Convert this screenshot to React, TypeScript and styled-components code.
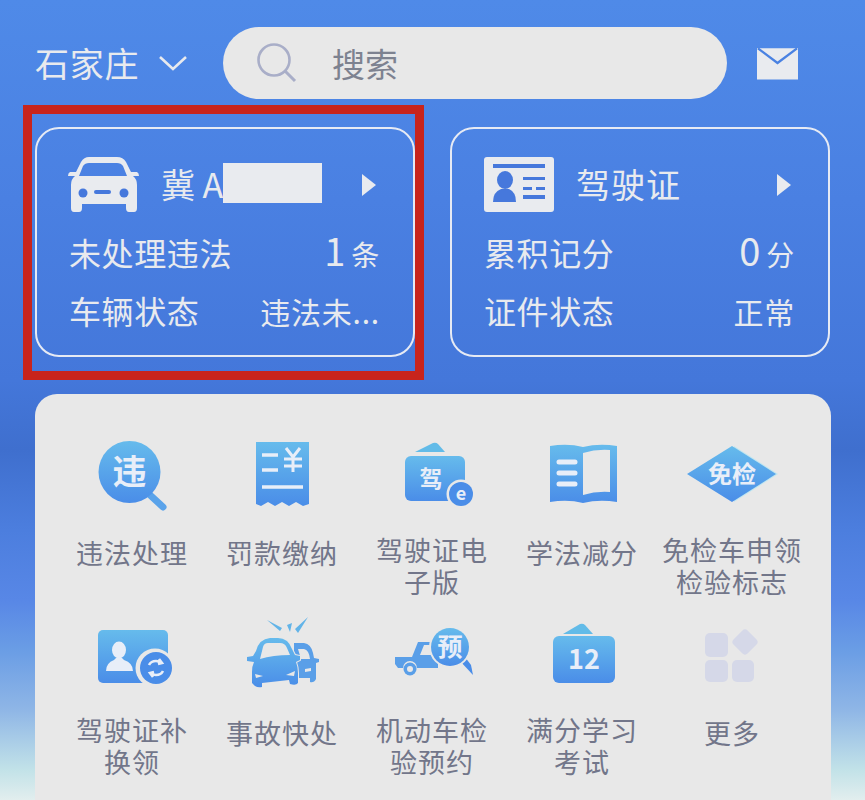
import React from "react";
import styled, { createGlobalStyle } from "styled-components";

const GlobalStyle = createGlobalStyle`
  html, body {
    margin: 0;
    padding: 0;
    background: #4a7fe0;
  }
  *, *::after {
    box-sizing: border-box;
  }
`;

const Page = styled.div`
  width: 865px;
  height: 800px;
  overflow: hidden;
  padding: 27px 35px 0;
  font-family: "Noto Sans CJK SC", "Noto Sans", sans-serif;
  background: linear-gradient(
    180deg,
    #4f8ae8 0,
    #4a80e2 200px,
    #4477da 380px,
    #3f6fce 450px,
    #4c7ede 530px,
    #5887e6 600px,
    #6a9de5 650px,
    #8fb6e6 710px,
    #c2e2e8 770px,
    #e2eeee 800px
  );
`;

const TopBar = styled.div`
  display: flex;
  align-items: center;
  height: 72px;
`;

const CityName = styled.span`
  font-size: 34px;
  letter-spacing: 0.7px;
  line-height: 72px;
  color: #e8eaee;
`;

const CityChevron = styled.svg`
  width: 30px;
  height: 18px;
  margin: 0 35px 0 19px;
`;

const SearchBox = styled.div`
  display: flex;
  align-items: center;
  width: 504px;
  height: 72px;
  padding-left: 33px;
  border-radius: 36px;
  background: #e8e8e8;
`;

const SearchIcon = styled.svg`
  width: 42px;
  height: 42px;
`;

const SearchHint = styled.span`
  margin-left: 34px;
  font-size: 33px;
  color: #7d8290;
`;

const MailIcon = styled.svg`
  width: 41px;
  height: 33px;
  margin-left: 30px;
`;

const Cards = styled.div`
  display: flex;
  gap: 35px;
  margin-top: 28px;
`;

const Card = styled.div<{ $marked?: boolean }>`
  position: relative;
  width: 380px;
  height: 230px;
  padding: 28px 33px 0 31px;
  border: 2px solid #e6eaf4;
  border-radius: 24px;
  color: #e8eaee;

  ${({ $marked }) =>
    $marked &&
    `
    &::after {
      content: "";
      position: absolute;
      left: -14px;
      top: -24px;
      width: 401px;
      height: 275px;
      border: 9px solid #c8241c;
    }
  `}
`;

const CardHead = styled.div`
  display: flex;
  align-items: center;
  height: 56px;
  margin-bottom: 10px;
`;

const CardIcon = styled.svg`
  width: 72px;
  height: 56px;
  flex: none;
`;

const CardTitle = styled.div<{ $wide?: boolean }>`
  display: flex;
  align-items: center;
  margin: -2px 0 0 21px;
  font-size: 34px;
  line-height: 40px;
  letter-spacing: ${({ $wide }) => ($wide ? 1 : 0)}px;
`;

const PlateMask = styled.span`
  width: 99px;
  height: 40px;
  margin-top: -3px;
  background: #e9ebef;
`;

const CardArrow = styled.svg`
  width: 16px;
  height: 26px;
  margin-left: auto;
  margin-right: 3px;
`;

const CardRow = styled.div`
  display: flex;
  align-items: baseline;
  justify-content: space-between;
  height: 58px;
  padding-left: 1px;
  font-size: 32px;
  letter-spacing: 0.6px;
  line-height: 58px;
`;

const RowValue = styled.span`
  font-size: 30px;
  letter-spacing: 0.8px;
`;

const RowNumber = styled.span`
  font-size: 38px;
  line-height: 1;
  margin-right: 5px;
`;

const RowUnit = styled.span`
  font-size: 28px;
`;

const Panel = styled.div`
  width: 796px;
  height: 420px;
  margin-top: 37px;
  padding: 43px 22px 0;
  border-radius: 22px 22px 0 0;
  background: #e8e8e8;
`;

const Grid = styled.div`
  display: grid;
  grid-template-columns: repeat(5, 150px);
  grid-auto-rows: 180px;
`;

const Tile = styled.div`
  display: flex;
  flex-direction: column;
  align-items: center;
`;

const TileIcon = styled.svg`
  width: 100px;
  height: 80px;
  flex: none;
`;

const TileLabel = styled.div<{ $single?: boolean }>`
  margin-top: ${({ $single }) => ($single ? 20 : 17)}px;
  font-size: 27px;
  line-height: 32px;
  letter-spacing: 1px;
  text-align: center;
  color: #72768a;
  white-space: nowrap;
`;

const LabelLine = styled.div``;

const BLUE = "url(#tileBlue)";
const PANEL = "#e8e8e8";

const GlyphText = styled.text`
  font-family: "Noto Sans CJK SC", sans-serif;
  font-weight: 700;
  fill: #e8eef8;
  text-anchor: middle;
`;

const Defs = () => (
  <svg width="0" height="0" style={{ position: "absolute" }}>
    <defs>
      <linearGradient id="tileBlue" x1="0" y1="0" x2="0" y2="1">
        <stop offset="0" stopColor="#66bbec" />
        <stop offset="1" stopColor="#4a8de8" />
      </linearGradient>
    </defs>
  </svg>
);

const tiles: { lines: string[]; icon: React.ReactNode }[] = [
  {
    lines: ["违法处理"],
    icon: (
      <>
        <path d="M68 58l13 12" stroke="#5aa3ea" strokeWidth="7" strokeLinecap="round" />
        <circle cx="47.5" cy="35" r="31" fill={BLUE} />
        <GlyphText x="47.5" y="47" fontSize="34">违</GlyphText>
      </>
    )
  },
  {
    lines: ["罚款缴纳"],
    icon: (
      <>
        <path
          d="M24 5h53v62l-6 2-7-4-7 4-7-4-7 4-7-4-7 4-5-2z"
          fill={BLUE}
        />
        <path d="M30 18h16M30 33h16M30 50h41" stroke="#e8eef8" strokeWidth="3.5" />
        <path
          d="M54 11l7 9 7-9M52 22h18M52 29h18M61 20v15"
          stroke="#e8eef8"
          strokeWidth="3"
          fill="none"
        />
      </>
    )
  },
  {
    lines: ["驾驶证电", "子版"],
    icon: (
      <>
        <path d="M33 15L51 6q3-1 5 1l7 8z" fill="#62bbe8" />
        <rect x="23" y="19" width="60" height="45" rx="6" fill={BLUE} />
        <GlyphText x="49" y="50" fontSize="23">驾</GlyphText>
        <circle cx="79" cy="57" r="14.5" fill={PANEL} />
        <circle cx="79" cy="57" r="12" fill="#4a8de8" />
        <GlyphText x="79" y="63" fontSize="18">e</GlyphText>
      </>
    )
  },
  {
    lines: ["学法减分"],
    icon: (
      <>
        <path
          d="M18 9q18-3 33 1 16-4 34-1v56q-18-3-34 1-15-4-33-1z"
          fill={BLUE}
        />
        <path d="M51 16q13-4 27-3v42q-14-1-27 3z" fill={PANEL} />
        <path d="M27 25h16M27 36h16M27 47h16" stroke="#e8eef8" strokeWidth="5" strokeLinecap="round" />
      </>
    )
  },
  {
    lines: ["免检车申领", "检验标志"],
    icon: (
      <>
        <path d="M52 9l44 28-44 28z" fill="#bfe6f0" />
        <path d="M50 9l44 28-44 28L5 37z" fill={BLUE} />
        <GlyphText x="50" y="46" fontSize="24">免检</GlyphText>
      </>
    )
  },
  {
    lines: ["驾驶证补", "换领"],
    icon: (
      <>
        <rect x="16" y="13" width="70" height="53" rx="5" fill={BLUE} />
        <ellipse cx="37" cy="33" rx="7" ry="8.5" fill="#e8eef8" />
        <path d="M24 54q0-8 8-11l2-2h6l2 2q9 3 9 11z" fill="#e8eef8" />
        <circle cx="73" cy="51" r="19.5" fill={PANEL} />
        <circle cx="74" cy="51" r="16" fill="#4a8de8" />
        <path
          d="M67 48q2-4 7-4 3 0 5 2M77 42l3 4-4 1M81 54q-2 4-7 4-3 0-5-2M71 60l-3-4 4-1"
          stroke="#e8eef8"
          strokeWidth="2.6"
          fill="none"
        />
      </>
    )
  },
  {
    lines: ["事故快处"],
    icon: (
      <>
        <path d="M35 3l15 8-2 3zM55 8l5-2-2 9zM76 0l-13 12 3 4z" fill="#62b4e8" />
        <path
          d="M62 26H72q7 1 9 10l1 5 5 1v3l-3 1v16q-2 4-6 3v-4H62z"
          fill="#5a9fe8"
        />
        <path d="M66 32h6q5 1 6 10H69zM73 52l6-1v3l-6 1z" fill={PANEL} />
        <path
          d="M24 34q3-12 14-13h8q10 0 14 11l3 6 5 1v4l-4 2q2 5 2 11v10q-2 3-8 1l-1-4-27 3v4q-4 1-7-1l-3-3V55q0-6 2-10l-7-1v-4l6-1z"
          fill={BLUE}
          stroke={PANEL}
          strokeWidth="2"
          paintOrder="stroke"
        />
        <path d="M28 42l3-12q1-4 5-4h12q5 0 7 5l3 7q-17 0-30 4z" fill={PANEL} />
        <path d="M23 57l8 2-7 2zM63 54l-9 4 8 1z" fill={PANEL} />
      </>
    )
  },
  {
    lines: ["机动车检", "验预约"],
    icon: (
      <>
        <path
          d="M13 40H30L36 25H56V51H35a7 7 0 0 0-14 0H16l-3-4z"
          fill="#5a9fe8"
        />
        <path d="M38 38l4-10h10v10z" fill={PANEL} />
        <circle cx="28" cy="52" r="6.5" fill="#5a9fe8" />
        <circle cx="28" cy="52" r="3" fill={PANEL} />
        <path d="M78 44l13 14-2-10-6-8z" fill="#4a8de8" />
        <circle cx="68" cy="30" r="21" fill={PANEL} />
        <circle cx="68" cy="30" r="19" fill={BLUE} />
        <GlyphText x="68" y="39" fontSize="25">预</GlyphText>
      </>
    )
  },
  {
    lines: ["满分学习", "考试"],
    icon: (
      <>
        <path d="M31 17L48 7q3-1 5 1l8 9z" fill="#62bbe8" />
        <rect x="21" y="19" width="62" height="47" rx="6" fill={BLUE} />
        <GlyphText x="52" y="52" fontSize="27">12</GlyphText>
      </>
    )
  },
  {
    lines: ["更多"],
    icon: (
      <>
        <rect x="23" y="16" width="23" height="24" rx="5" fill="#d5d8e8" />
        <rect x="23" y="43" width="23" height="22" rx="5" fill="#d5d8e8" />
        <rect x="50" y="43" width="22" height="22" rx="5" fill="#d5d8e8" />
        <rect x="53" y="15" width="20" height="20" rx="4" fill="#d5d8e8" transform="rotate(45 63 25)" />
      </>
    )
  }
];

const Arrow = () => (
  <CardArrow viewBox="0 0 16 26">
    <path d="M1 2l14 11L1 24z" fill="#e9ebef" />
  </CardArrow>
);

const App = () => {
  return (
    <Page>
      <GlobalStyle />
      <Defs />
      <TopBar>
        <CityName>石家庄</CityName>
        <CityChevron viewBox="0 0 30 18">
          <path d="M2 3l13 12L28 3" stroke="#e8eaee" strokeWidth="2.6" fill="none" />
        </CityChevron>
        <SearchBox>
          <SearchIcon viewBox="0 0 42 42">
            <circle cx="18" cy="18" r="15.5" stroke="#a9aec8" strokeWidth="2.6" fill="none" />
            <path d="M29 29l10 10" stroke="#a9aec8" strokeWidth="3" />
          </SearchIcon>
          <SearchHint>搜索</SearchHint>
        </SearchBox>
        <MailIcon viewBox="0 0 42 33">
          <path d="M0 1h42v32H0z" fill="#e9ebef" />
          <path d="M1 1l20 15L41 1" stroke="#4a82e2" strokeWidth="2.4" fill="none" />
        </MailIcon>
      </TopBar>

      <Cards>
        <Card $marked>
          <CardHead>
            <CardIcon viewBox="0 0 72 56">
              <path
                fillRule="evenodd"
                fill="#e9ebef"
                d="M21 0h28q6 0 9 5l5 10h6q2 1 2 4h-6q4 3 4 9v23q0 4-3 4h-5q-3 0-3-4v-4H14v4q0 4-3 4H6q-3 0-3-4V28q0-6 4-9H0q0-3 2-4h6l5-10q3-5 8-5zM21 6q-4 0-6 3l-4 10h48l-4-10q-2-3-6-3z"
              />
              <circle cx="15" cy="36" r="4.5" fill="#4678dc" />
              <circle cx="56" cy="36" r="4.5" fill="#4678dc" />
              <rect x="26" y="33" width="17" height="4" rx="2" fill="#4678dc" />
            </CardIcon>
            <CardTitle>
              冀 A<PlateMask />
            </CardTitle>
            <Arrow />
          </CardHead>
          <CardRow>
            <span>未处理违法</span>
            <RowValue>
              <RowNumber>1</RowNumber>
              <RowUnit>条</RowUnit>
            </RowValue>
          </CardRow>
          <CardRow>
            <span>车辆状态</span>
            <RowValue>违法未...</RowValue>
          </CardRow>
        </Card>

        <Card>
          <CardHead>
            <CardIcon viewBox="0 0 72 56">
              <rect x="1" y="0" width="70" height="55" rx="3" fill="#e9ebef" />
              <rect x="10" y="7" width="52" height="4" fill="#4678dc" />
              <ellipse cx="22" cy="23" rx="8" ry="9" fill="#4678dc" />
              <path d="M10 45q0-10 8-13h8q7 3 7 13z" fill="#4678dc" />
              <path d="M40 20h22v3H40zM40 30h9v3h-9zM53 30h9v3h-9zM40 38h22v4H40z" fill="#4678dc" />
            </CardIcon>
            <CardTitle $wide>驾驶证</CardTitle>
            <Arrow />
          </CardHead>
          <CardRow>
            <span>累积记分</span>
            <RowValue>
              <RowNumber>0</RowNumber>
              <RowUnit>分</RowUnit>
            </RowValue>
          </CardRow>
          <CardRow>
            <span>证件状态</span>
            <RowValue>正常</RowValue>
          </CardRow>
        </Card>
      </Cards>

      <Panel>
        <Grid>
          {tiles.map(tile => (
            <Tile key={tile.lines[0]}>
              <TileIcon viewBox="0 0 100 80">{tile.icon}</TileIcon>
              <TileLabel $single={tile.lines.length === 1}>
                {tile.lines.map(line => (
                  <LabelLine key={line}>{line}</LabelLine>
                ))}
              </TileLabel>
            </Tile>
          ))}
        </Grid>
      </Panel>
    </Page>
  );
};

export default App;
